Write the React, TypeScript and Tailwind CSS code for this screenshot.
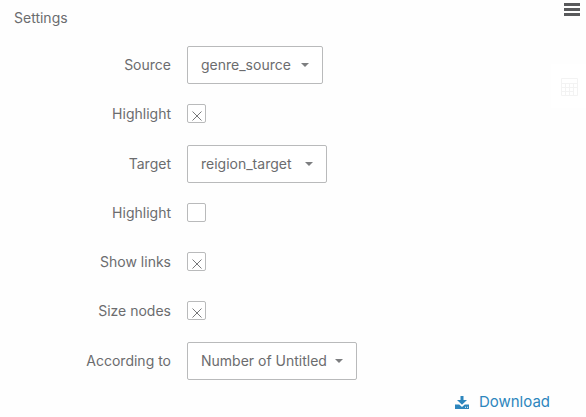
import { useState } from "react";

type SelectRowProps = { id: string; label: string; options: string[]; width?: string };

function SelectRow({ id, label, options, width = "" }: SelectRowProps) {
  return (
    <div className="flex h-[50px] items-center gap-4">
      <label htmlFor={id} className="w-[171px] shrink-0 text-right">
        {label}
      </label>
      <div className="relative">
        <select
          id={id}
          className={`block h-[38px] appearance-none rounded-xs border border-[#b9babb] bg-white pr-[29px] pl-[13px] ${width}`}
        >
          {options.map((option) => (
            <option key={option}>{option}</option>
          ))}
        </select>
        <svg
          viewBox="0 0 8 4"
          className="pointer-events-none absolute top-[17px] right-[14px] h-1 w-2 fill-[#7d7e80]"
          aria-hidden="true"
        >
          <path d="M0 0h8L4 4z" />
        </svg>
      </div>
    </div>
  );
}

function CheckRow({ id, label, initial }: { id: string; label: string; initial: boolean }) {
  const [checked, setChecked] = useState(initial);
  return (
    <div className="flex h-[49px] items-center gap-4 pb-0.5">
      <label htmlFor={id} className="w-[171px] shrink-0 text-right">
        {label}
      </label>
      <div className="relative">
        <input
          id={id}
          type="checkbox"
          checked={checked}
          onChange={(event) => setChecked(event.target.checked)}
          className="block size-[19px] appearance-none rounded-xs border border-[#b9babb] bg-white"
        />
        {checked && (
          <svg
            viewBox="0 0 10 10"
            className="pointer-events-none absolute top-[7px] left-[5px] size-[10px] stroke-[#77787a]"
            aria-hidden="true"
          >
            <path d="M.5.5l9 9M9.5.5l-9 9" fill="none" strokeWidth="1" />
          </svg>
        )}
      </div>
    </div>
  );
}

export default function App() {
  return (
    <main className="min-h-screen bg-[#fefefe] font-['Inter',sans-serif] text-sm text-[#6b6c6e]">
      <header className="flex h-10 items-start justify-between pr-[6px] pl-[14px]">
        <h1 className="pt-2">Settings</h1>
        <button type="button" aria-label="Menu" className="pt-[3px]">
          <svg viewBox="0 0 16 13" className="h-[13px] w-4 fill-[#58595b]" aria-hidden="true">
            <path d="M0 0h16v3H0zM0 5h16v3H0zM0 10h16v3H0z" />
          </svg>
        </button>
      </header>
      <div className="flex justify-between">
        <form>
          <SelectRow id="source" label="Source" options={["genre_source"]} width="min-w-[136px]" />
          <CheckRow id="highlight-source" label="Highlight" initial={true} />
          <SelectRow id="target" label="Target" options={["reigion_target"]} width="min-w-[140px]" />
          <CheckRow id="highlight-target" label="Highlight" initial={false} />
          <CheckRow id="links" label="Show links" initial={true} />
          <CheckRow id="size" label="Size nodes" initial={true} />
          <SelectRow id="according" label="According to" options={["Number of Untitled"]} width="min-w-[170px]" />
        </form>
        <button
          type="button"
          aria-label="Calculator"
          className="mt-6 flex h-11 w-[35px] items-center justify-end bg-white pt-0.5 pr-2"
        >
          <svg viewBox="0 0 17 18" className="h-[18px] w-[17px] stroke-[#f3f3f3]" fill="none" aria-hidden="true">
            <path d="M.5.5h16v17H.5zM.5 5.5h16M.5 9.5h16M.5 13.5h12M4.5 5.5v12M8.5 5.5v12M12.5 5.5v12" />
          </svg>
        </button>
      </div>
      <footer className="flex justify-end pt-1 pr-9">
        <a href="#download" className="flex items-center gap-[10px] text-[15px] leading-6 text-[#2d86bd]">
          <svg viewBox="0 0 14 13" className="h-[13px] w-[14px] fill-current" aria-hidden="true">
            <path d="M5.5 0h3v4H12L7 8.8 2 4h3.500zM0 8.500h4.200L7 11l2.800-2.500H14V13H0zM10 10.800v1h1v-1zM12 10.800v1h1v-1z" fillRule="evenodd" />
          </svg>
          Download
        </a>
      </footer>
    </main>
  );
}
